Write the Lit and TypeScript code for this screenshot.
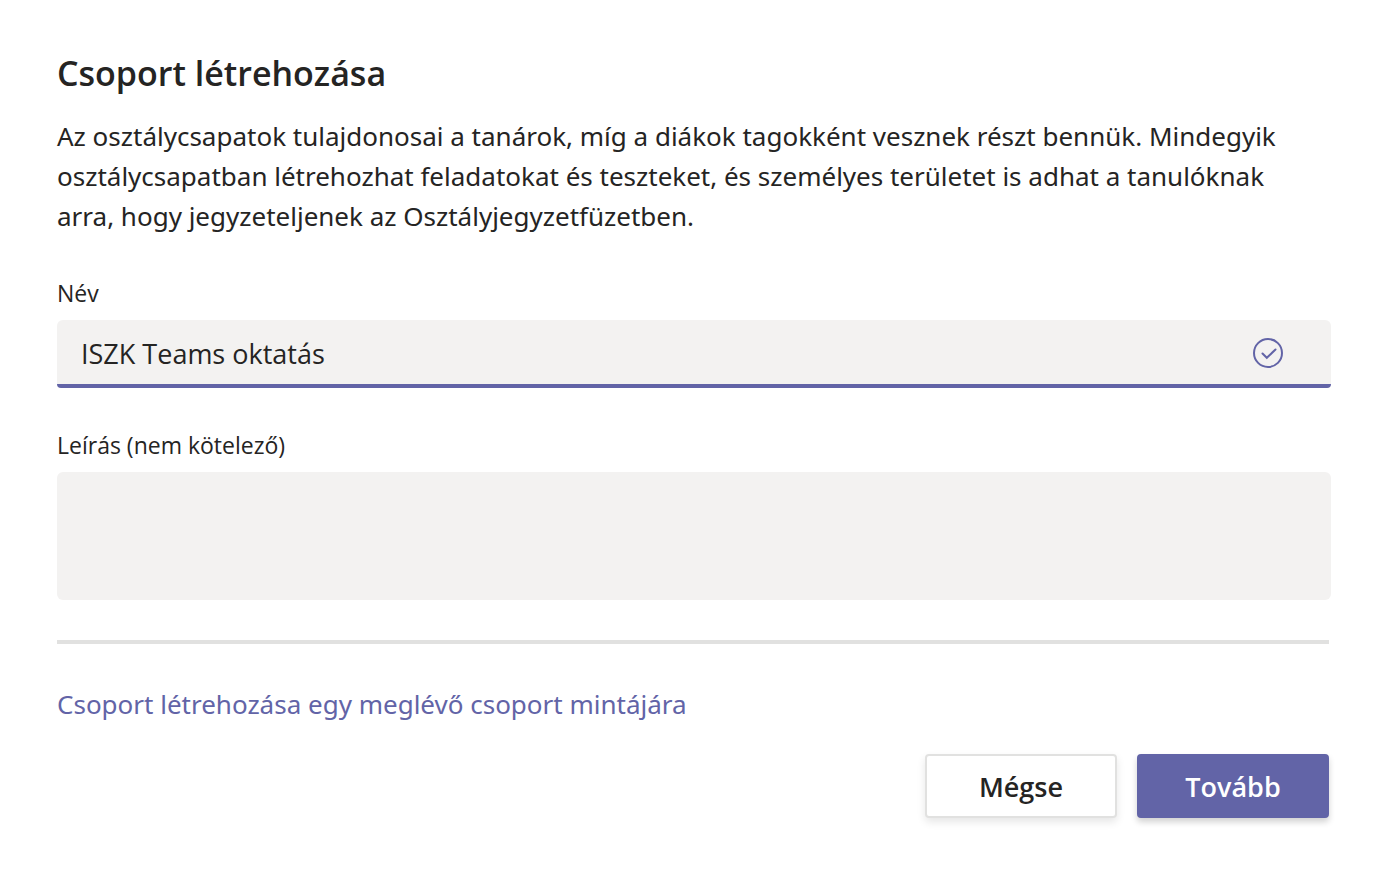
import { LitElement, html, css } from "lit";
import { customElement, state } from "lit/decorators.js";

@customElement("app-root")
export class AppRoot extends LitElement {
  static styles = css`
    :host {
      display: block;
      font-family: "Segoe UI", "Open Sans", "Noto Sans", sans-serif;
      color: #252423;
      background: #fff;
    }
    * { box-sizing: border-box; }
    .dialog { padding: 48px 54px 58px 57px; }
    h1 { margin: 0; font-size: 34px; line-height: 50px; font-weight: 600; }
    .intro, a { font-family: "Segoe UI", "Noto Sans", "Open Sans", sans-serif; font-size: 26px; line-height: 40px; }
    .intro { margin: 18px 0 0; padding-right: 24px; }
    .field { display: flex; flex-direction: column; margin-top: 40px; }
    label { font-size: 23px; line-height: 34px; margin-bottom: 10px; }
    .box { display: flex; align-items: center; height: 68px; padding: 0 48px 2px 24px; background: linear-gradient(#6264a7, #6264a7) bottom / 100% 4px no-repeat #f3f2f1; border-radius: 6px 6px 4px 4px; }
    input { flex: 1; min-width: 0; padding: 2px 0 0; border: 0; outline: 0; background: none; font: inherit; font-size: 27px; line-height: 40px; color: inherit; }
    .check { width: 30px; height: 30px; flex: none; }
    textarea { display: block; height: 128px; padding: 12px 24px; border: 0; border-radius: 6px; outline: 0; resize: none; background: #f3f2f1; font: inherit; font-size: 27px; line-height: 40px; color: inherit; }
    .footer { padding-right: 2px; }
    hr { margin: 40px 0; border: 0; height: 4px; background: #e1e1e0; }
    a { display: inline-block; color: #6264a7; text-decoration: none; }
    .actions { display: flex; justify-content: flex-end; gap: 20px; margin-top: 30px; }
    button { width: 192px; height: 64px; padding: 0; border: 2px solid #e1e1e0; border-radius: 4px; background: #fff; color: #252423; font: inherit; font-size: 27px; font-weight: 600; box-shadow: 0 4px 8px rgba(0, 0, 0, 0.1); }
    .primary { border-color: #6264a7; background: #6264a7; color: #fff; box-shadow: 0 4px 6px rgba(0, 0, 0, 0.18); }
  `;

  @state() private name = "ISZK Teams oktatás";

  render() {
    return html`
      <form class="dialog" @submit=${(e: Event) => e.preventDefault()}>
        <h1>Csoport létrehozása</h1>
        <p class="intro">
          Az osztálycsapatok tulajdonosai a tanárok, míg a diákok tagokként vesznek részt bennük. Mindegyik osztálycsapatban létrehozhat feladatokat és teszteket, és személyes területet is adhat a tanulóknak arra, hogy jegyzeteljenek az Osztályjegyzetfüzetben.
        </p>
        <div class="field">
          <label for="name">Név</label>
          <div class="box">
            <input id="name" type="text" .value=${this.name}
              @input=${(e: Event) => (this.name = (e.target as HTMLInputElement).value)} />
            <svg class="check" viewBox="0 0 30 30" fill="none" stroke="#6264a7" stroke-width="2" stroke-linecap="round" aria-hidden="true">
              <circle cx="15" cy="15" r="14" />
              <path d="M9.5 15.5l4.3 4.3 8.7-8.3" />
            </svg>
          </div>
        </div>
        <div class="field">
          <label for="desc">Leírás (nem kötelező)</label>
          <textarea id="desc"></textarea>
        </div>
        <div class="footer">
          <hr />
          <a href="#">Csoport létrehozása egy meglévő csoport mintájára</a>
          <div class="actions">
            <button type="button">Mégse</button>
            <button class="primary" type="submit">Tovább</button>
          </div>
        </div>
      </form>
    `;
  }
}
